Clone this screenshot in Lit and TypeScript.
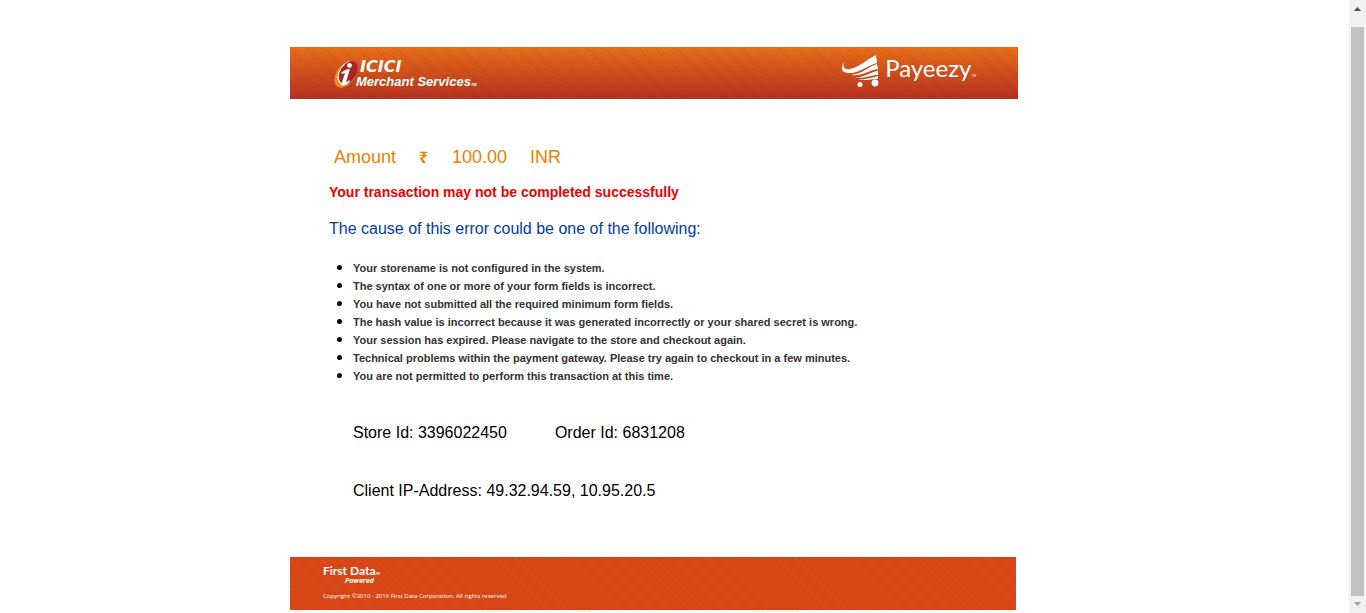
import { LitElement, html, css } from "lit";
import { customElement } from "lit/decorators.js";

const CAUSES = [
  "Your storename is not configured in the system.",
  "The syntax of one or more of your form fields is incorrect.",
  "You have not submitted all the required minimum form fields.",
  "The hash value is incorrect because it was generated incorrectly or your shared secret is wrong.",
  "Your session has expired. Please navigate to the store and checkout again.",
  "Technical problems within the payment gateway. Please try again to checkout in a few minutes.",
  "You are not permitted to perform this transaction at this time.",
];

@customElement("brand-banner")
export class BrandBanner extends LitElement {
  static styles = css`
    :host {
      display: flex;
      justify-content: space-between;
      box-sizing: border-box;
      height: 52px;
      padding: 0 42px 0 44px;
      color: #fff;
      background:
        repeating-linear-gradient(45deg, rgba(120, 30, 10, 0.1) 0 1px, transparent 1px 3px),
        linear-gradient(#ec6f19, #b4301f);
    }
    .icici { display: flex; padding-top: 12px; }
    .mark { flex: none; width: 25px; height: 30px; }
    .names { display: flex; flex-direction: column; margin-left: -3px; white-space: nowrap; }
    .bank { padding-left: 4px; font: italic bold 16px/16px "DejaVu Sans", sans-serif; }
    .service { font: italic bold 13px/14px "Liberation Sans", Arial, sans-serif; }
    .tm { font-size: 4px; line-height: 4px; }
    .payeezy { display: flex; padding-top: 7px; }
    .cart { width: 40px; height: 34px; }
    .word { padding-left: 4px; font: 24px/28px Lato, sans-serif; }
    .word .tm { font-size: 3px; }
  `;

  render() {
    return html`
      <div class="icici">
        <svg class="mark" viewBox="0 0 25 30" aria-hidden="true">
          <ellipse cx="11" cy="16" rx="9" ry="14" transform="rotate(32 11 16)" fill="#f28a1e" />
          <ellipse cx="13.500" cy="14" rx="8.500" ry="13" transform="rotate(32 13.5 14)" fill="#fff" />
          <ellipse cx="14.300" cy="13.500" rx="8" ry="12.500" transform="rotate(32 14.3 13.5)" fill="#a82425" />
          <circle cx="15.500" cy="6.500" r="2.400" fill="#fff" />
          <path d="M7 14c3-3 6-4 9-4l-4 13 4-2-1 2c-3 3-6 4-8 3l4-12-3 1z" fill="#fff" />
        </svg>
        <div class="names">
          <span class="bank">ICICI</span>
          <span class="service">Merchant Services<span class="tm">TM</span></span>
        </div>
      </div>
      <div class="payeezy">
        <svg class="cart" viewBox="0 0 40 34" aria-hidden="true" fill="#fff">
          <path d="M4 8C1 11 2 16 9 15 19 13 26 5 35 1l1 8C27 11 19 19 9 19 3 19 1 17 1 14 1 11 2 9 4 8z" />
          <path d="M10 21c11-1 17-8 26-11l1 5c-10 1-16 8-27 6z" />
          <path d="M14 23.500c9 0 15-5 23-7v4.500c-8 0-14 4-23 2.500z" />
          <path d="M17 25.500c8 0 14-2 20-3.500v3c-7 0-13 2-20 .5z" />
          <circle cx="19" cy="30.500" r="2.500" />
          <circle cx="34" cy="29" r="3.400" />
        </svg>
        <span class="word">Payeezy<span class="tm">TM</span></span>
      </div>
    `;
  }
}

@customElement("page-footer")
export class PageFooter extends LitElement {
  static styles = css`
    :host {
      display: flex;
      flex-direction: column;
      box-sizing: border-box;
      height: 53px;
      padding: 7px 33px 0;
      color: #fff;
      background: repeating-linear-gradient(45deg, rgba(230, 100, 40, 0.25) 0 1px, transparent 1px 3px), #d64415;
    }
    .brand { font: bold 12px/13px Lato, sans-serif; }
    .tm { font-size: 3px; line-height: 3px; }
    .powered { padding-left: 22px; font: italic bold 7px/8px "Open Sans", sans-serif; }
    .copyright { margin: 0; padding-top: 7px; font: 6px/8px "Open Sans", sans-serif; }
  `;

  render() {
    return html`
      <span class="brand">First Data<span class="tm">TM</span></span>
      <span class="powered">Powered</span>
      <p class="copyright">Copyright ©2010 - 2016 First Data Corporation. All rights reserved</p>
    `;
  }
}

@customElement("app-root")
export class AppRoot extends LitElement {
  static styles = css`
    :host {
      display: grid;
      grid-template-columns: minmax(0, 1fr) 17px;
      min-height: 100vh;
      background: #fff;
      color: #000;
      font: 16px/20px "Liberation Sans", Arial, sans-serif;
    }
    .page {
      width: 100%;
      max-width: 769px;
      margin: 0 auto;
      padding-top: 47px;
      box-sizing: border-box;
    }
    .banner { max-width: 728px; }
    .footer { max-width: 726px; }
    .content { padding: 48px 39px 56px; }
    .amount { display: flex; gap: 23px; padding-left: 5px; color: #ee7f00; font-size: 18px; }
    .rupee { width: 10px; font: bold 16px/20px "Noto Sans", sans-serif; }
    .warning { margin: 15px 0 0; color: #f00000; font-size: 14px; line-height: 20px; }
    .lead { margin: 17px 0 0; color: #003da5; font-size: 16px; font-weight: normal; line-height: 20px; }
    .causes { margin: 19px 0 0; padding: 0 0 0 24px; font-size: 16px; line-height: 18px; }
    .cause { font-size: 11px; font-weight: bold; line-height: 12px; color: #333; }
    .ids { display: flex; gap: 48px; padding: 39px 0 0 24px; }
    .client { margin: 0; padding: 38px 0 0 24px; }
    .scroll {
      display: flex;
      flex-direction: column;
      align-items: center;
      background: #f1f1f1;
    }
    .arrow { display: block; flex: none; width: 17px; height: 17px; }
    .thumb { flex: 1; width: 13px; margin-top: 10px; background: #c1c1c1; }
  `;

  render() {
    return html`
      <main class="page">
        <brand-banner class="banner"></brand-banner>
        <section class="content">
          <div class="amount">
            <span>Amount</span><span class="rupee">₹</span><span>100.00</span><span>INR</span>
          </div>
          <h1 class="warning">Your transaction may not be completed successfully</h1>
          <h2 class="lead">The cause of this error could be one of the following:</h2>
          <ul class="causes">
            ${CAUSES.map((cause) => html`<li><span class="cause">${cause}</span></li>`)}
          </ul>
          <div class="ids"><span>Store Id: 3396022450</span><span>Order Id: 6831208</span></div>
          <p class="client">Client IP-Address: 49.32.94.59, 10.95.20.5</p>
        </section>
        <page-footer class="footer"></page-footer>
      </main>
      <div class="scroll" aria-hidden="true">
        <svg class="arrow" viewBox="0 0 17 17"><path d="M5 11l3.500-4 3.500 4z" fill="#505050" /></svg>
        <div class="thumb"></div>
        <svg class="arrow" viewBox="0 0 17 17"><path d="M5 6l3.500 4 3.500-4z" fill="#a3a3a3" /></svg>
      </div>
    `;
  }
}
